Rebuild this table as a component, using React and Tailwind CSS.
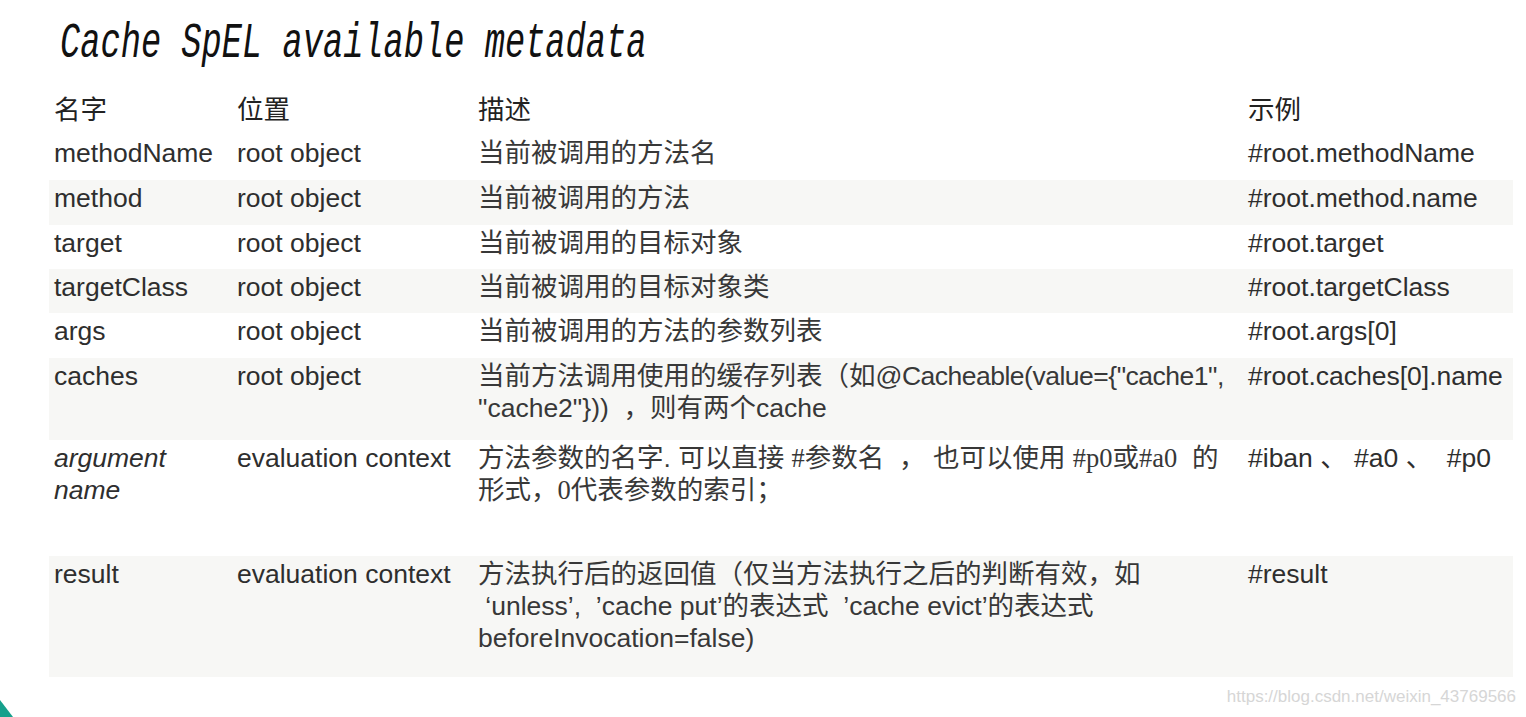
import React from "react";

const latin = { fontFamily: '"Liberation Sans", "Noto Sans CJK SC", Arial, sans-serif' };

function Half({ children }) {
  return (
    <span style={{ fontFamily: '"Liberation Serif", "Times New Roman", serif' }}>{children}</span>
  );
}

function Row({ h, gray, c1, c2, c3, c4, italic }) {
  return (
    <div
      className={`flex items-start pl-[5px] pt-[2px] ${gray ? "bg-[#f7f7f5]" : "bg-white"}`}
      style={{ height: h }}
    >
      <div className={`w-[183px] shrink-0 whitespace-nowrap ${italic ? "italic" : ""}`}>{c1}</div>
      <div className="w-[241px] shrink-0 whitespace-nowrap">{c2}</div>
      <div className="w-[770px] shrink-0 whitespace-nowrap text-[#383838]">{c3}</div>
      <div className="flex-1 whitespace-nowrap">{c4}</div>
    </div>
  );
}

export default function App() {
  return (
    <div
      className="relative h-[717px] w-full overflow-hidden bg-white text-[26.5px] leading-[32px] text-[#2e2e2e]"
      style={latin}
    >
      <div className="h-[90px] pl-[60px] pt-[19px]">
        <div
          className="origin-left scale-x-[0.674] whitespace-nowrap text-[50px] italic leading-[50px] text-[#111]"
          style={{ fontFamily: '"Liberation Mono", "Courier New", monospace' }}
        >
          Cache SpEL available metadata
        </div>
      </div>

      <div className="ml-[49px] w-[1464px]">
        <div className="flex h-[45px] items-start pl-[5px] pt-[4px] text-[#222]">
          <div className="w-[183px] shrink-0">名字</div>
          <div className="w-[241px] shrink-0">位置</div>
          <div className="w-[770px] shrink-0">描述</div>
          <div className="flex-1">示例</div>
        </div>

        <Row h={45} c1="methodName" c2="root object" c3="当前被调用的方法名" c4="#root.methodName" />
        <Row h={45} gray c1="method" c2="root object" c3="当前被调用的方法" c4="#root.method.name" />
        <Row h={44} c1="target" c2="root object" c3="当前被调用的目标对象" c4="#root.target" />
        <Row h={44} gray c1="targetClass" c2="root object" c3="当前被调用的目标对象类" c4="#root.targetClass" />
        <Row h={45} c1="args" c2="root object" c3="当前被调用的方法的参数列表" c4="#root.args[0]" />
        <Row
          h={82}
          gray
          c1="caches"
          c2="root object"
          c3={
            <>
              当前方法调用使用的缓存列表（如
              <span className="tracking-[-0.5px]">@Cacheable(value={'{'}"cache1",</span>
              <br />
              "cache2"{'}'}))&nbsp;&nbsp;，则有两个cache
            </>
          }
          c4="#root.caches[0].name"
        />
        <Row
          h={116}
          italic
          c1={
            <>
              argument
              <br />
              name
            </>
          }
          c2="evaluation context"
          c3={
            <>
              方法参数的名字. 可以直接&nbsp;<Half>#</Half>参数名&nbsp;&nbsp;，&nbsp;也可以使用&nbsp;
              <Half>#p0</Half>或<Half>#a0</Half>&nbsp;&nbsp;的
              <br />
              形式，<Half>0</Half>代表参数的索引；
            </>
          }
          c4={<>#iban 、 #a0 、&nbsp;&nbsp;#p0</>}
        />
        <Row
          h={121}
          gray
          c1="result"
          c2="evaluation context"
          c3={
            <>
              方法执行后的返回值（仅当方法执行之后的判断有效，如
              <br />
              &nbsp;‘unless’,&nbsp;&nbsp;’cache put’的表达式&nbsp;&nbsp;’cache evict’的表达式
              <br />
              beforeInvocation=false)
            </>
          }
          c4="#result"
        />
      </div>

      <div className="mt-[10px] pr-[10px] text-right text-[17px] leading-[20px] text-[#d6d6d6]">
        https://blog.csdn.net/weixin_43769566
      </div>

      <svg className="absolute bottom-0 left-0" width="20" height="20" viewBox="0 0 20 20">
        <polygon points="0,3 13,20 0,20" fill="#16a08c" />
      </svg>
    </div>
  );
}
